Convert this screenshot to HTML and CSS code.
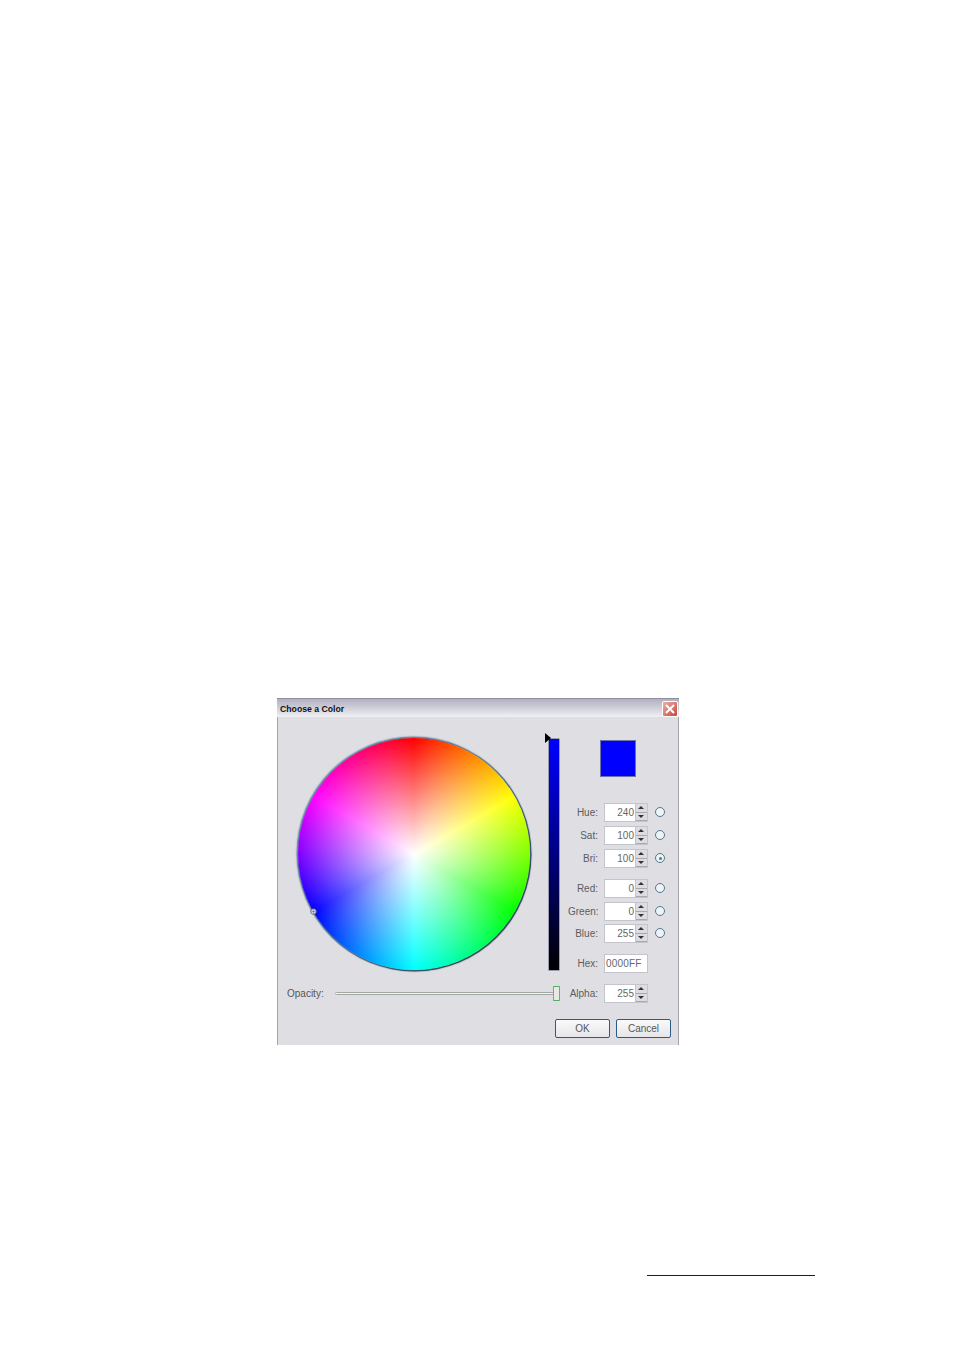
FILE: index.html
```html
<!DOCTYPE html>
<html lang="en">
<head>
    <meta charset="UTF-8">
    <title>Choose a Color</title>
    <link rel="stylesheet" href="styles.css">
</head>
<body>

<div class="dialog">
    <div class="title-bar">
        <span class="title">Choose a Color</span>
        <div class="close-btn">
            <svg width="14" height="14" viewBox="0 0 14 14">
                <path d="M3 3 L11 11 M11 3 L3 11" stroke="#fff" stroke-width="2" fill="none"/>
            </svg>
        </div>
    </div>

    <div class="dialog-body">
        <div class="main-row">
            <div class="wheel">
                <svg class="wheel-marker" width="7" height="7" viewBox="0 0 7 7">
                    <circle cx="3.5" cy="3.5" r="2.8" fill="#dfdfe3" stroke="#555" stroke-width="0.8"/>
                    <path d="M3.5 1.5 V5.5 M1.5 3.5 H5.5" stroke="#777" stroke-width="0.7"/>
                </svg>
            </div>
            <div class="bright-bar">
                <div class="bar-arrow"></div>
            </div>
            <div class="side">
                <div class="swatch"></div>

                <div class="field first">
                    <span class="field-label">Hue:</span>
                    <div class="spin"><span class="spin-value">240</span><div class="spin-btns"><i class="up"></i><i class="down"></i></div></div>
                    <span class="radio"></span>
                </div>
                <div class="field">
                    <span class="field-label">Sat:</span>
                    <div class="spin"><span class="spin-value">100</span><div class="spin-btns"><i class="up"></i><i class="down"></i></div></div>
                    <span class="radio"></span>
                </div>
                <div class="field">
                    <span class="field-label">Bri:</span>
                    <div class="spin"><span class="spin-value">100</span><div class="spin-btns"><i class="up"></i><i class="down"></i></div></div>
                    <span class="radio checked"></span>
                </div>

                <div class="field group">
                    <span class="field-label">Red:</span>
                    <div class="spin"><span class="spin-value">0</span><div class="spin-btns"><i class="up"></i><i class="down"></i></div></div>
                    <span class="radio"></span>
                </div>
                <div class="field">
                    <span class="field-label">Green:</span>
                    <div class="spin"><span class="spin-value">0</span><div class="spin-btns"><i class="up"></i><i class="down"></i></div></div>
                    <span class="radio"></span>
                </div>
                <div class="field tight">
                    <span class="field-label">Blue:</span>
                    <div class="spin"><span class="spin-value">255</span><div class="spin-btns"><i class="up"></i><i class="down"></i></div></div>
                    <span class="radio"></span>
                </div>

                <div class="field group">
                    <span class="field-label">Hex:</span>
                    <div class="spin hex"><span class="spin-value">0000FF</span></div>
                </div>
            </div>
        </div>

        <div class="opacity-row">
            <span class="opacity-label">Opacity:</span>
            <div class="slider">
                <div class="slider-thumb"></div>
            </div>
            <span class="field-label">Alpha:</span>
            <div class="spin"><span class="spin-value">255</span><div class="spin-btns"><i class="up"></i><i class="down"></i></div></div>
        </div>

        <div class="button-row">
            <div class="btn">OK</div>
            <div class="btn">Cancel</div>
        </div>
    </div>
</div>

<div class="footer-link"></div>

</body>
</html>
```

FILE: styles.css
```css
body {
    margin: 0;
    padding-top: 698px;
    background-color: #fff;
    font-family: "Liberation Sans", Arial, sans-serif;
    font-size: 10px;
    color: #555;
}

.dialog {
    width: 402px;
    margin-left: 277px;
}

.title-bar {
    height: 19px;
    box-sizing: border-box;
    display: flex;
    align-items: center;
    justify-content: space-between;
    padding: 1px 1px 0 3px;
    border-top: 1px solid #8f8f9c;
    background: linear-gradient(#b0b0c2, #c6c6d2 35%, #f0f0f4);
}

.title {
    font-size: 8.7px;
    font-weight: bold;
    color: #111;
}

.close-btn {
    width: 16px;
    height: 16px;
    border-radius: 2px;
    background: linear-gradient(135deg, #eab0a6, #c9483c);
    border: 1px solid #fff;
    box-sizing: border-box;
    display: flex;
    align-items: center;
    justify-content: center;
}

.close-btn svg {
    flex: none;
}

.dialog-body {
    height: 328px;
    box-sizing: border-box;
    background-color: #dfdfe3;
    border-left: 1px solid #a4a4b0;
    border-right: 1px solid #a4a4b0;
}

.main-row {
    display: flex;
    height: 259px;
}

.wheel {
    position: relative;
    flex: none;
    width: 232px;
    height: 232px;
    margin: 21px 0 0 20px;
    border-radius: 50%;
    background:
        radial-gradient(circle closest-side, #fff 0, rgba(255, 255, 255, 0) 100%),
        conic-gradient(#f00, #ff0 60deg, #0f0 120deg, #0ff 180deg, #00f 240deg, #f0f 300deg, #f00);
    box-shadow: -0.5px -0.5px 1.5px 1px #5d84a4, 0.5px 0.5px 1px 1px #16303f;
}

.wheel-marker {
    position: absolute;
    left: 12px;
    top: 170px;
}

.bright-bar {
    position: relative;
    flex: none;
    width: 10px;
    height: 231px;
    margin: 22px 0 0 19px;
    background: linear-gradient(#0000ff, #000);
    box-shadow: 0 0 0 0.5px #555a80;
}

.bar-arrow {
    position: absolute;
    left: -4px;
    top: -6px;
    border-left: 6px solid #000;
    border-top: 5px solid transparent;
    border-bottom: 5px solid transparent;
}

.side {
    margin-left: 9px;
    width: 110px;
}

.swatch {
    width: 34px;
    height: 35px;
    margin: 23px 0 0 32px;
    background-color: #0000ff;
    border: 1px solid #6f72a8;
}

.field {
    display: flex;
    align-items: center;
    height: 19px;
    margin-top: 4px;
}

.field.first {
    margin-top: 26px;
}

.field.group {
    margin-top: 11px;
}

.field.tight {
    margin-top: 3px;
}

.field-label {
    flex: none;
    width: 30px;
    margin-right: 6px;
    text-align: right;
    color: #5c5c5c;
}

.spin {
    flex: none;
    display: flex;
    justify-content: flex-end;
    align-items: center;
    width: 44px;
    height: 19px;
    box-sizing: border-box;
    background-color: #fff;
    border: 1px solid #c4c4cc;
    color: #666;
}

.spin-value {
    padding-right: 1px;
}

.spin.hex {
    justify-content: flex-start;
    padding-left: 1px;
    letter-spacing: 0.2px;
}

.spin-btns {
    flex: none;
    width: 11px;
    height: 17px;
    display: flex;
    flex-direction: column;
    background-color: #dfdfe3;
    border-left: 1px solid #c4c4cc;
}

.spin-btns i {
    flex: 1;
    position: relative;
    background-color: #dcdce2;
    border-bottom: 1px solid #a8a8b0;
}

.spin-btns i::after {
    content: "";
    position: absolute;
    left: 2px;
    top: 2px;
    border-left: 3px solid transparent;
    border-right: 3px solid transparent;
}

.spin-btns .up::after {
    border-bottom: 3px solid #333;
}

.spin-btns .down::after {
    border-top: 3px solid #333;
}

.radio {
    flex: none;
    position: relative;
    width: 8px;
    height: 8px;
    margin-left: 7px;
    margin-top: -1px;
    border: 1px solid #4a7a94;
    border-radius: 50%;
    background-color: #f2f2f4;
}

.radio.checked::after {
    content: "";
    position: absolute;
    left: 2.5px;
    top: 2.5px;
    width: 3px;
    height: 3px;
    border-radius: 50%;
    background-color: #2c9a50;
}

.opacity-row {
    display: flex;
    align-items: center;
    height: 19px;
    margin-top: 8px;
}

.opacity-label {
    flex: none;
    width: 39px;
    margin-left: 9px;
    white-space: nowrap;
}

.slider {
    position: relative;
    flex: none;
    width: 224px;
    height: 3px;
    margin-left: 9px;
    margin-right: 0;
    background-color: #f4f4ee;
    border: 1px solid #a4a8a4;
    border-radius: 2px;
    box-sizing: border-box;
}

.slider-thumb {
    position: absolute;
    right: -2px;
    top: -7px;
    width: 7px;
    height: 15px;
    box-sizing: border-box;
    background-color: #e8e8e4;
    border: 1px solid #8a9a90;
    border-top-color: #4fae60;
    border-bottom-color: #4fae60;
    border-radius: 1px;
}

.opacity-row .field-label {
    margin-left: 9px;
}

.button-row {
    display: flex;
    justify-content: flex-end;
    gap: 6px;
    margin-top: 16px;
    padding-right: 7px;
}

.btn {
    width: 55px;
    height: 19px;
    box-sizing: border-box;
    display: flex;
    align-items: center;
    justify-content: center;
    font-size: 10px;
    color: #555;
    background: linear-gradient(#fafafa, #e6e6ea);
    border: 1px solid #2c5a84;
    border-radius: 2px;
}

.footer-link {
    width: 168px;
    height: 1px;
    margin: 230px 0 0 647px;
    background-color: #0000ff;
}
```
